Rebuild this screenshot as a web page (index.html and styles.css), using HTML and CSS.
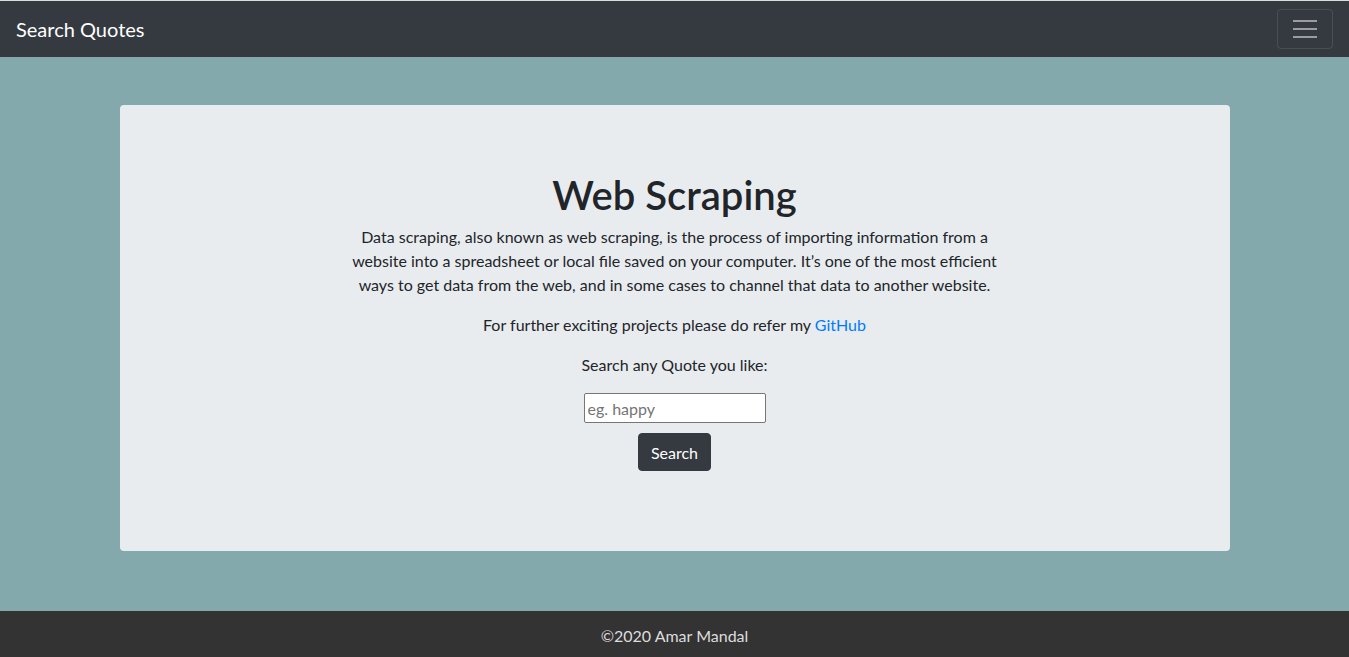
FILE: index.html
```html
<!DOCTYPE html>
<html lang="en">
<head>
<meta charset="utf-8">
<title>Search Quotes</title>
<link rel="stylesheet" href="styles.css">
</head>
<body>
<nav class="navbar">
  <a class="brand" href="#">Search Quotes</a>
  <button class="toggler" type="button" aria-label="Toggle navigation">
    <span class="toggler-icon"><span></span><span></span><span></span></span>
  </button>
</nav>
<main class="main">
  <section class="jumbotron">
    <h1 class="title">Web Scraping</h1>
    <p class="lead">Data scraping, also known as web scraping, is the process of importing information from a website into a spreadsheet or local file saved on your computer. It’s one of the most efficient ways to get data from the web, and in some cases to channel that data to another website.</p>
    <p class="text">For further exciting projects please do refer my <a class="link" href="#">GitHub</a></p>
    <p class="text">Search any Quote you like:</p>
    <form class="search">
      <input class="search-input" type="text" placeholder="eg. happy">
      <button class="btn" type="button">Search</button>
    </form>
  </section>
</main>
<footer class="footer">©2020 Amar Mandal</footer>
</body>
</html>
```
FILE: styles.css
```css
* { box-sizing: border-box; }
html, body { margin: 0; padding: 0; }
body {
  font-family: Lato, "Noto Sans", "Liberation Sans", sans-serif;
  font-size: 16px;
  line-height: 1.5;
  color: #212529;
  background: #84a9ac;
  border-top: 1px solid #dcdcdc;
}
.navbar {
  height: 56px;
  background: #343a40;
  display: flex;
  align-items: center;
  justify-content: space-between;
  padding: 0 16px;
}
.brand {
  color: #fff;
  font-size: 20px;
  line-height: 30px;
  text-decoration: none;
}
.toggler {
  width: 56px;
  height: 40px;
  background: transparent;
  border: 1px solid rgba(255,255,255,.1);
  border-radius: 4px;
  padding: 0;
  display: flex;
  align-items: center;
  justify-content: center;
}
.toggler-icon {
  display: flex;
  flex-direction: column;
  gap: 6px;
  width: 24px;
}
.toggler-icon span {
  display: block;
  height: 2px;
  background: rgba(255,255,255,.5);
}
.main {
  padding: 48px 0 60px;
}
.jumbotron {
  width: 1110px;
  margin: 0 auto;
  background: #e9ecef;
  border-radius: 4px;
  padding: 64px 32px 80px;
  display: flex;
  flex-direction: column;
  align-items: center;
  text-align: center;
}
.title {
  margin: 0 0 6px;
  padding-top: 2px;
  font-size: 40px;
  line-height: 48px;
  font-weight: 600;
}
.lead {
  margin: 0 0 16px;
  max-width: 670px;
}
.text { margin: 0 0 16px; }
.link { color: #007bff; text-decoration: none; }
.search {
  display: flex;
  flex-direction: column;
  align-items: center;
  gap: 10px;
}
.search-input {
  width: 182px;
  height: 30px;
  border: 1px solid #767676;
  border-radius: 2px;
  padding: 1px 3px;
  font-family: inherit;
  font-size: 16px;
  background: #fff;
}
.search-input::placeholder { color: #757575; }
.btn {
  height: 38px;
  padding: 0 12px;
  font-family: inherit;
  font-size: 16px;
  color: #fff;
  background: #343a40;
  border: 1px solid #343a40;
  border-radius: 4px;
}
.footer {
  height: 46px;
  padding-top: 4px;
  background: #333;
  color: #ddd;
  display: flex;
  align-items: center;
  justify-content: center;
  font-size: 16px;
}
```
